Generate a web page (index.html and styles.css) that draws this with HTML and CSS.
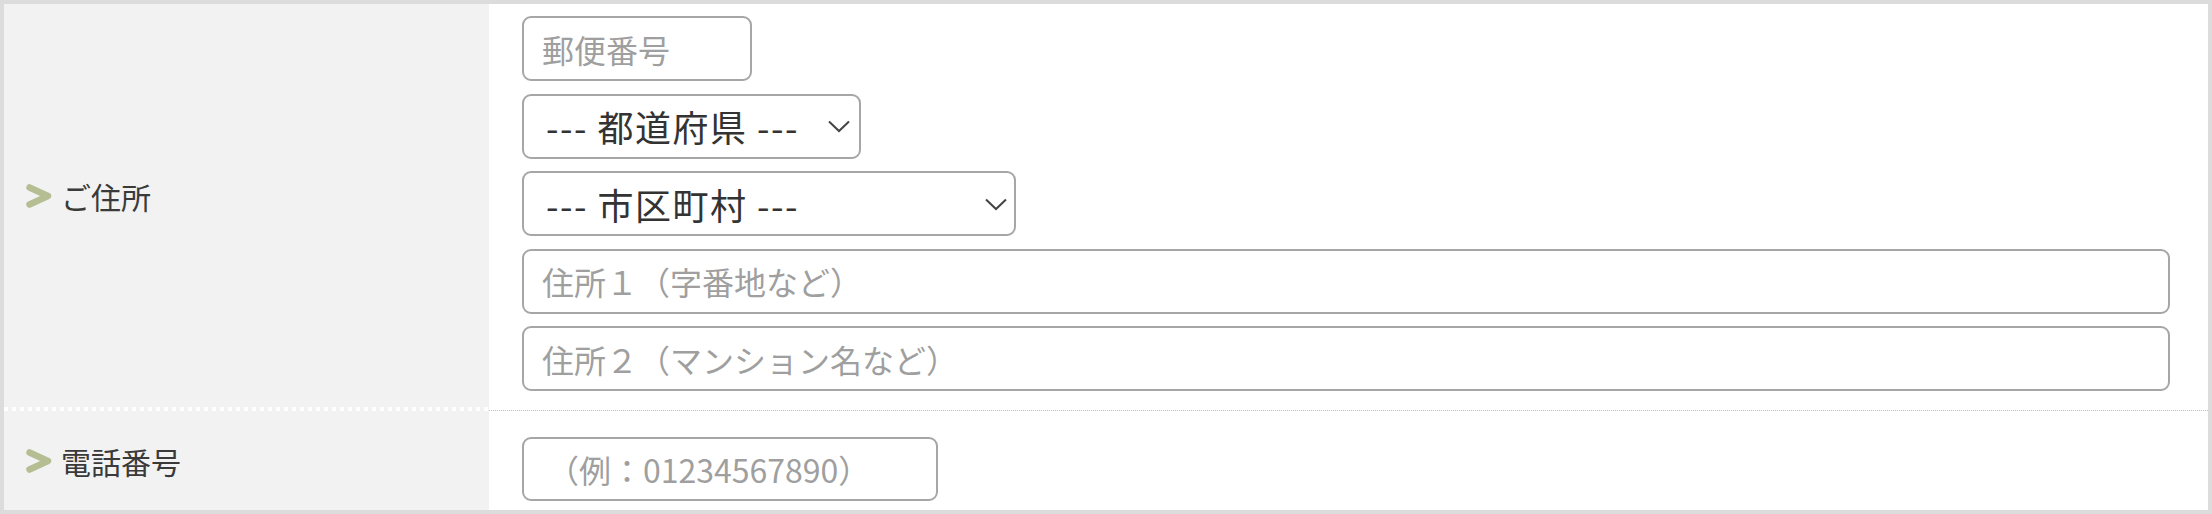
FILE: index.html
```html
<!DOCTYPE html>
<html lang="ja">
<head>
<meta charset="utf-8">
<title>ご住所フォーム</title>
<link rel="stylesheet" href="styles.css">
</head>
<body>
<div class="form-table">
  <div class="row row-address">
    <div class="label">
      <svg class="label-mark" width="26" height="24" viewBox="0 0 26 24"><polyline points="3.5,3.5 22,12 3.5,20.5" fill="none" stroke="#b4be92" stroke-width="6.5" stroke-linejoin="round" stroke-linecap="round"/></svg>
      <span>ご住所</span>
    </div>
    <div class="field field-stack">
      <input class="input input-zip" type="text" placeholder="郵便番号">
      <div class="select-wrap select-pref">
        <select class="select"><option>--- 都道府県 ---</option></select>
        <svg class="select-arrow" width="22" height="13" viewBox="0 0 22 13"><polyline points="1,1.5 11,11 21,1.5" fill="none" stroke="#444" stroke-width="2"/></svg>
      </div>
      <div class="select-wrap select-city">
        <select class="select"><option>--- 市区町村 ---</option></select>
        <svg class="select-arrow" width="22" height="13" viewBox="0 0 22 13"><polyline points="1,1.5 11,11 21,1.5" fill="none" stroke="#444" stroke-width="2"/></svg>
      </div>
      <input class="input input-full" type="text" placeholder="住所１（字番地など）">
      <input class="input input-full" type="text" placeholder="住所２（マンション名など）">
    </div>
  </div>
  <div class="row row-tel">
    <div class="label">
      <svg class="label-mark" width="26" height="24" viewBox="0 0 26 24"><polyline points="3.5,3.5 22,12 3.5,20.5" fill="none" stroke="#b4be92" stroke-width="6.5" stroke-linejoin="round" stroke-linecap="round"/></svg>
      <span>電話番号</span>
    </div>
    <div class="field">
      <input class="input input-tel" type="tel" placeholder="（例：01234567890）">
    </div>
  </div>
</div>
</body>
</html>
```

FILE: styles.css
```css
* {
  box-sizing: border-box;
}

html,
body {
  margin: 0;
  padding: 0;
  background: #fff;
}

body {
  font-family: "Noto Sans CJK JP", "Noto Sans", sans-serif;
}

.form-table {
  width: 2212px;
  height: 514px;
  border: 4px solid #dcdcdc;
  display: flex;
  flex-direction: column;
}

.row {
  display: flex;
}

.label {
  width: 485px;
  flex: none;
  background-color: #f2f2f2;
  display: flex;
  align-items: center;
  gap: 9px;
  padding-left: 22px;
  font-size: 30px;
  color: #3a3a3a;
}

.label-mark {
  flex: none;
}

.row-address .label {
  padding-bottom: 24px;
  background-image: repeating-linear-gradient(to right, #fff 0 4px, transparent 4px 8px);
  background-size: 100% 4px;
  background-position: left bottom;
  background-repeat: no-repeat;
}

.row-tel {
  flex: 1;
}

.row-tel .label {
  padding-top: 1px;
}

.field {
  flex: 1;
  background: #fff;
  padding-left: 33px;
  padding-right: 38px;
}

.field-stack {
  display: flex;
  flex-direction: column;
  align-items: flex-start;
  gap: 12.5px;
  padding-top: 12px;
  padding-bottom: 19px;
  border-bottom: 1px dotted #bdbdbd;
}

.row-tel .field {
  padding-top: 26px;
  padding-bottom: 9px;
}

.input {
  display: block;
  height: 65px;
  border: 2px solid #a6a6a6;
  border-radius: 9px;
  padding: 0 18px;
  font-family: inherit;
  font-size: 32px;
  color: #333;
  background: #fff;
  outline: none;
}

.input::placeholder {
  color: #9f9f9f;
}

.input-zip {
  width: 230px;
}

.input-full {
  width: 100%;
}

.input-tel {
  width: 416px;
  height: 64px;
  padding-left: 23px;
}

.select-wrap {
  position: relative;
  height: 65px;
}

.select-pref {
  width: 339px;
}

.select-city {
  width: 494px;
}

.select {
  -webkit-appearance: none;
  appearance: none;
  display: block;
  width: 100%;
  height: 100%;
  border: 2px solid #a6a6a6;
  border-radius: 9px;
  background: #fff;
  font-family: inherit;
  font-size: 36px;
  letter-spacing: 1.5px;
  color: #333;
  padding: 0 44px 0 22px;
  outline: none;
}

.select-arrow {
  position: absolute;
  top: 50%;
  margin-top: -6px;
  right: 11px;
  pointer-events: none;
}

.select-city .select-arrow {
  right: 9px;
}
```
